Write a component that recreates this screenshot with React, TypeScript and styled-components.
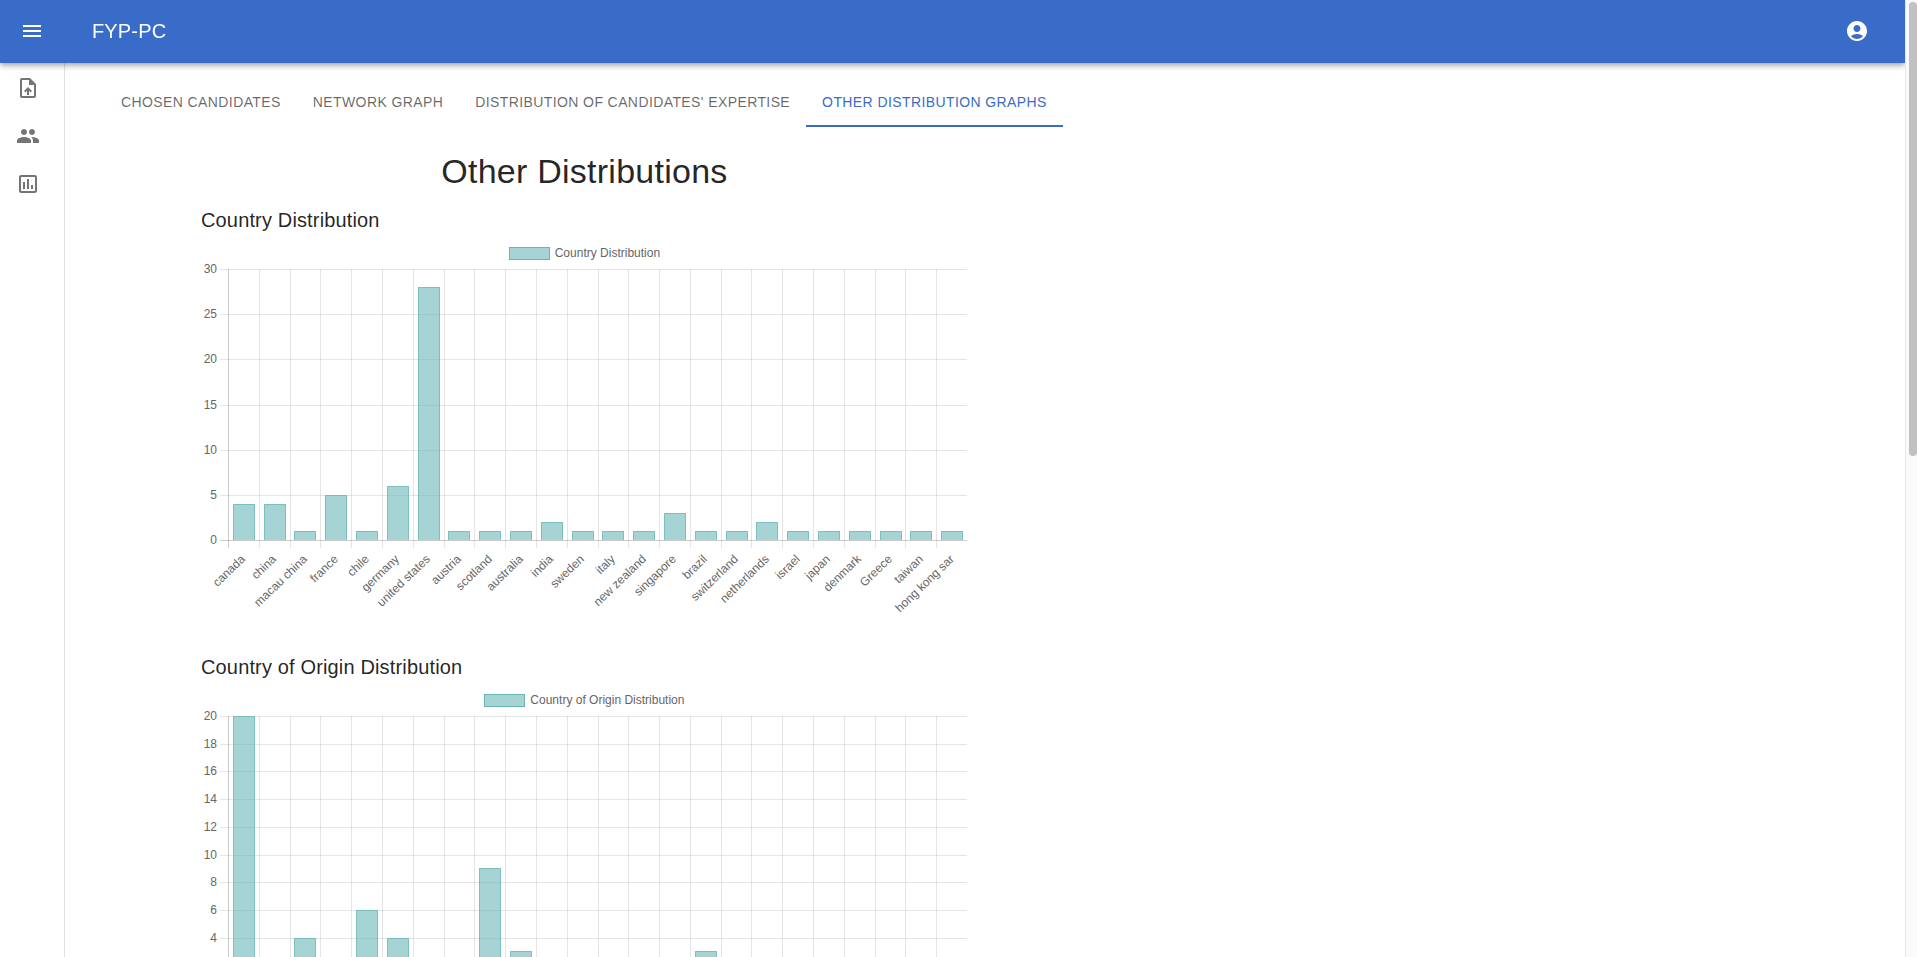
import React, { useLayoutEffect, useRef, useState } from "react";
import styled, { createGlobalStyle } from "styled-components";
import {
  MdAccountCircle,
  MdMenu,
  MdOutlineAssessment,
  MdPeople,
  MdUploadFile,
} from "react-icons/md";

const PRIMARY = "#396bc8";
const BAR_FILL = "rgba(106, 182, 182, 0.6)";
const BAR_STROKE = "rgb(106, 182, 182)";

const GlobalStyle = createGlobalStyle`
  *, *::before, *::after { box-sizing: border-box; }
  body {
    margin: 0;
    background: #fff;
    color: rgba(0, 0, 0, 0.87);
    font-family: "Liberation Sans", Arial, sans-serif;
  }
`;

const Shell = styled.div`
  display: flex;
  height: 100vh;
`;

const Viewport = styled.div`
  flex: 1;
  min-width: 0;
  overflow-y: auto;
  scrollbar-width: none;
`;

const ScrollTrack = styled.div`
  flex: 0 0 12px;
  padding: 2px 0 2px 3px;
  border-left: 1px solid #e8e8e8;
  background: #fafafa;
`;

const ScrollThumb = styled.div`
  height: 47.6%;
  border-radius: 4px;
  background: #c1c1c1;
`;

const AppBar = styled.header`
  position: sticky;
  top: 0;
  z-index: 2;
  display: flex;
  align-items: center;
  height: 63px;
  padding: 0 24px 2px 8px;
  background: ${PRIMARY};
  color: #fff;
  box-shadow: 0 2px 4px -1px rgba(0, 0, 0, 0.2), 0 4px 5px 0 rgba(0, 0, 0, 0.14),
    0 1px 10px 0 rgba(0, 0, 0, 0.12);
`;

const IconButton = styled.button`
  display: flex;
  padding: 12px;
  border: 0;
  background: none;
  color: inherit;
  cursor: pointer;
`;

const Brand = styled.span`
  flex: 1;
  margin-left: 36px;
  font-size: 20px;
  letter-spacing: 0.0075em;
  line-height: 32px;
`;

const Body = styled.div`
  display: flex;
  min-height: calc(100vh - 63px);
`;

const Sidebar = styled.nav`
  flex: 0 0 65px;
  padding-top: 1px;
  border-right: 1px solid #e0e0e0;
`;

const SidebarLink = styled.a`
  display: flex;
  align-items: center;
  height: 48px;
  padding: 0 16px;
  color: #757575;
`;

const Main = styled.main`
  flex: 1;
  min-width: 0;
  padding: 16px 40px;
`;

const Tabs = styled.div`
  display: flex;
`;

const Tab = styled.button<{ $active?: boolean }>`
  height: 48px;
  padding: 0 16px;
  border: 0;
  border-bottom: 2px solid ${(p) => (p.$active ? PRIMARY : "transparent")};
  background: none;
  color: ${(p) => (p.$active ? PRIMARY : "rgba(0, 0, 0, 0.6)")};
  font: inherit;
  font-size: 14px;
  letter-spacing: 0.02857em;
  text-transform: uppercase;
  white-space: nowrap;
  cursor: pointer;
`;

const Charts = styled.div`
  width: 40vw;
  margin-left: 96px;
  padding-top: 23px;
`;

const PageTitle = styled.h1`
  margin: 0 0 12px;
  font-size: 34px;
  font-weight: 400;
  letter-spacing: 0.00735em;
  line-height: 42px;
  text-align: center;
`;

const Section = styled.section`
  margin-bottom: 31px;
`;

const SectionTitle = styled.h2`
  margin: 0 0 1px;
  font-size: 20px;
  font-weight: 400;
  letter-spacing: 0.0075em;
  line-height: 32px;
`;

const Figure = styled.figure`
  margin: 0;
`;

const Legend = styled.figcaption`
  display: flex;
  align-items: center;
  justify-content: center;
  gap: 5px;
  height: 32px;
  color: #666;
  font-size: 12px;
`;

const Swatch = styled.span`
  width: 41px;
  height: 13px;
  border: 1px solid ${BAR_STROKE};
  background: ${BAR_FILL};
  background-clip: padding-box;
`;

const Plot = styled.svg`
  display: block;
  overflow: visible;
  font-size: 12px;
  fill: #666;
`;

interface ChartProps {
  label: string;
  values: number[];
  categories?: string[];
  max: number;
  step: number;
  footer: number;
}

const AXIS_LEFT = 27;
const TICK = 8;
const LEGEND_HEIGHT = 32;

function BarChart({ label, values, categories = [], max, step, footer }: ChartProps) {
  const ref = useRef<HTMLElement>(null);
  const [width, setWidth] = useState(600);

  useLayoutEffect(() => {
    const node = ref.current;
    if (!node) return;
    const measure = () => setWidth(Math.floor(node.clientWidth / 2) * 2);
    measure();
    const observer = new ResizeObserver(measure);
    observer.observe(node);
    return () => observer.disconnect();
  }, []);

  const height = width / 2 - LEGEND_HEIGHT;
  const bottom = height - footer;
  const column = (width - AXIS_LEFT) / values.length;
  const yOf = (v: number) => Math.round(bottom - (v / max) * bottom);
  const xOf = (i: number) => Math.round(AXIS_LEFT + i * column);
  const ticks = Array.from({ length: max / step + 1 }, (_, i) => i * step);
  const barWidth = Math.round(column * 0.72);

  return (
    <Figure ref={ref}>
      <Legend>
        <Swatch />
        {label}
      </Legend>
      <Plot width={width} height={height} role="img" aria-label={label}>
        {ticks.map((t) => (
          <g key={t}>
            <rect
              x={AXIS_LEFT - TICK}
              y={yOf(t)}
              width={width - AXIS_LEFT + TICK}
              height={1}
              fill={t === 0 ? "rgba(0,0,0,0.2)" : "rgba(0,0,0,0.1)"}
            />
            <text x={AXIS_LEFT - TICK - 3} y={yOf(t) + 4} textAnchor="end">
              {t}
            </text>
          </g>
        ))}
        {values.map((_, i) => (
          <rect
            key={i}
            x={xOf(i)}
            y={0}
            width={1}
            height={bottom + TICK}
            fill={i === 0 ? "rgba(0,0,0,0.2)" : "rgba(0,0,0,0.1)"}
          />
        ))}
        {values.map((v, i) => {
          const x = Math.ceil(AXIS_LEFT + (i + 0.5) * column - barWidth / 2);
          const y = yOf(v);
          return (
            <g key={i}>
              <rect x={x} y={y} width={barWidth} height={bottom - y} fill={BAR_FILL} />
              <path
                d={`M${x + 0.5} ${bottom}V${y + 0.5}H${x + barWidth - 0.5}V${bottom}`}
                fill="none"
                stroke={BAR_STROKE}
                strokeOpacity={0.7}
              />
            </g>
          );
        })}
        {categories.map((name, i) => {
          const x = Math.round(AXIS_LEFT + (i + 0.5) * column);
          const y = bottom + 17;
          return (
            <text
              key={name}
              transform={`translate(${x} ${y}) rotate(-44)`}
              y={4}
              textAnchor="end"
            >
              {name}
            </text>
          );
        })}
      </Plot>
    </Figure>
  );
}

const COUNTRIES: [string, number][] = [
  ["canada", 4],
  ["china", 4],
  ["macau china", 1],
  ["france", 5],
  ["chile", 1],
  ["germany", 6],
  ["united states", 28],
  ["austria", 1],
  ["scotland", 1],
  ["australia", 1],
  ["india", 2],
  ["sweden", 1],
  ["italy", 1],
  ["new zealand", 1],
  ["singapore", 3],
  ["brazil", 1],
  ["switzerland", 1],
  ["netherlands", 2],
  ["israel", 1],
  ["japan", 1],
  ["denmark", 1],
  ["Greece", 1],
  ["taiwan", 1],
  ["hong kong sar", 1],
];

const ORIGINS = [20, 1, 4, 1, 6, 4, 1, 1, 9, 3, 1, 1, 1, 1, 1, 3, 1, 1, 1, 1, 1, 1, 1, 1];

const TABS = [
  "Chosen Candidates",
  "Network Graph",
  "Distribution of Candidates' Expertise",
  "Other Distribution Graphs",
];

export default function App() {
  const [tab, setTab] = useState(3);
  return (
    <Shell>
      <GlobalStyle />
      <Viewport>
        <AppBar>
          <IconButton aria-label="Open menu">
            <MdMenu size={24} />
          </IconButton>
          <Brand>FYP-PC</Brand>
          <IconButton aria-label="Account">
            <MdAccountCircle size={24} />
          </IconButton>
        </AppBar>
        <Body>
          <Sidebar>
            <SidebarLink href="#upload" aria-label="Upload">
              <MdUploadFile size={24} />
            </SidebarLink>
            <SidebarLink href="#candidates" aria-label="Candidates">
              <MdPeople size={24} />
            </SidebarLink>
            <SidebarLink href="#results" aria-label="Results">
              <MdOutlineAssessment size={24} />
            </SidebarLink>
          </Sidebar>
          <Main>
            <Tabs role="tablist">
              {TABS.map((name, i) => (
                <Tab
                  key={name}
                  role="tab"
                  aria-selected={i === tab}
                  $active={i === tab}
                  onClick={() => setTab(i)}
                >
                  {name}
                </Tab>
              ))}
            </Tabs>
            <Charts>
              <PageTitle>Other Distributions</PageTitle>
              <Section>
                <SectionTitle>Country Distribution</SectionTitle>
                <BarChart
                  label="Country Distribution"
                  values={COUNTRIES.map((c) => c[1])}
                  categories={COUNTRIES.map((c) => c[0])}
                  max={30}
                  step={5}
                  footer={80}
                />
              </Section>
              <Section>
                <SectionTitle>Country of Origin Distribution</SectionTitle>
                <BarChart
                  label="Country of Origin Distribution"
                  values={ORIGINS}
                  max={20}
                  step={2}
                  footer={74}
                />
              </Section>
            </Charts>
          </Main>
        </Body>
      </Viewport>
      <ScrollTrack aria-hidden="true">
        <ScrollThumb />
      </ScrollTrack>
    </Shell>
  );
}
